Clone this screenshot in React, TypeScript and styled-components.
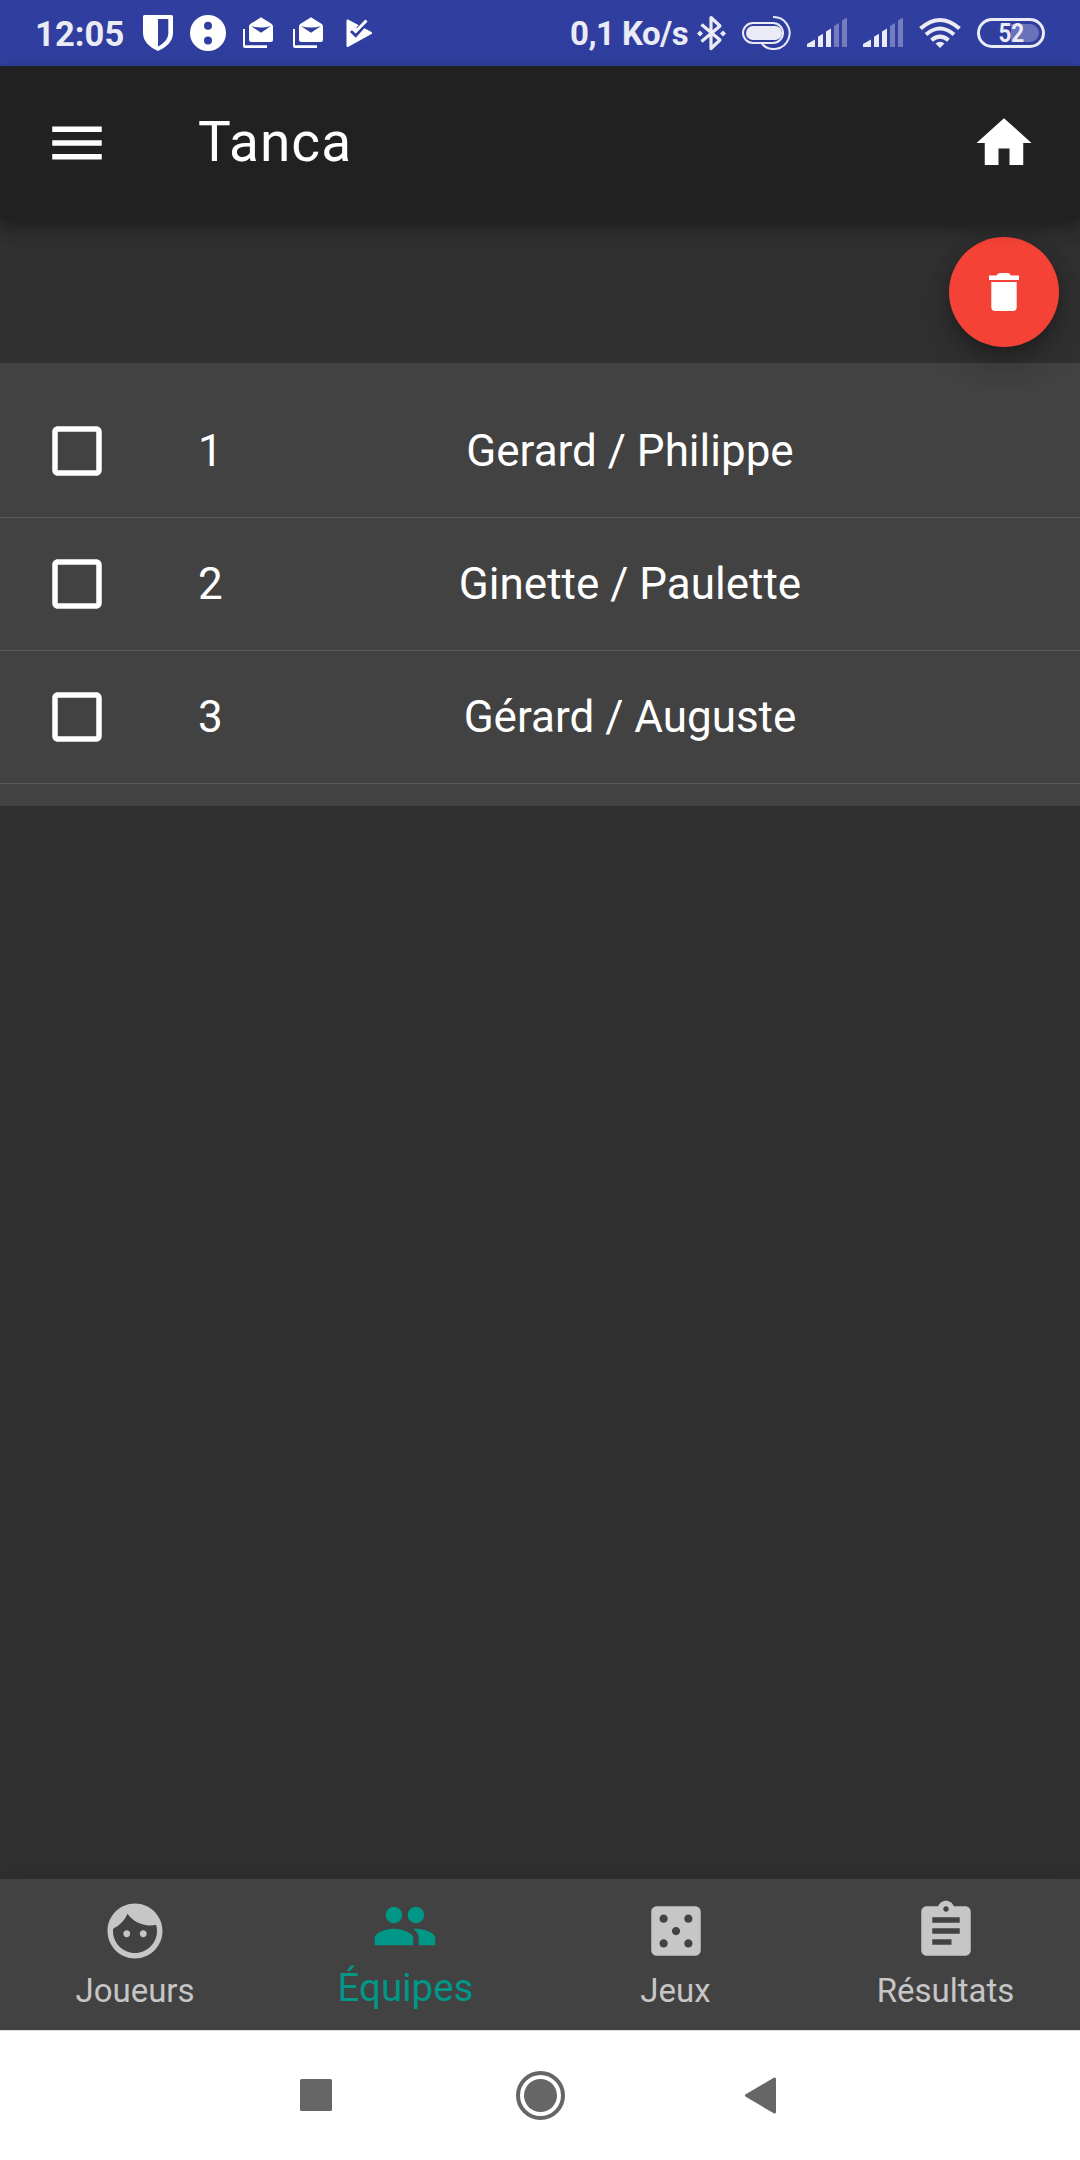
import React from "react";
import styled, { createGlobalStyle } from "styled-components";

const GlobalStyle = createGlobalStyle`
  * { box-sizing: border-box; }
  body { margin: 0; background: #303030; }
`;

const Screen = styled.div`
  display: flex;
  flex-direction: column;
  width: 1080px;
  height: 2160px;
  overflow: hidden;
  background: #303030;
  color: #fff;
  font-family: Roboto, "Noto Sans", sans-serif;
`;

const StatusBar = styled.header`
  display: flex;
  justify-content: space-between;
  height: 66px;
  flex: none;
  padding: 0 35px;
  background: #303f9f;
  color: #ebebf6;
`;

const StatusGroup = styled.div`
  display: flex;
  align-items: center;
`;

const StatusText = styled.span<{ $size: number; $width: number; $spacing: number }>`
  width: ${(p) => p.$width}px;
  font-size: ${(p) => p.$size}px;
  letter-spacing: ${(p) => p.$spacing}px;
  line-height: 66px;
  font-weight: 700;
  white-space: nowrap;
  padding-top: 2px;
`;

const StatusIcon = styled.svg<{ $gap: number }>`
  display: block;
  flex: none;
  height: 66px;
  margin-left: ${(p) => p.$gap}px;
`;

const Battery = styled.div`
  position: relative;
  display: flex;
  align-items: center;
  justify-content: center;
  width: 68px;
  height: 30px;
  margin-left: 16px;
  border: 3px solid #ebebf6;
  border-radius: 15px;
`;

const BatteryLevel = styled.span`
  position: absolute;
  top: 3px;
  right: 3px;
  width: 28px;
  height: 18px;
  border-radius: 0 9px 9px 0;
  background: #6a73b9;
`;

const BatteryText = styled.span`
  position: relative;
  padding-top: 2px;
  font-size: 25px;
  line-height: 24px;
  font-weight: 700;
  transform: scaleX(0.9);
`;

const AppBar = styled.div`
  position: relative;
  z-index: 2;
  display: flex;
  align-items: center;
  height: 154px;
  flex: none;
  padding: 0 43px 0 44px;
  background: #212121;
  box-shadow: 0 5.5px 11px -2.75px rgba(0, 0, 0, 0.2),
    0 11px 13.75px rgba(0, 0, 0, 0.14), 0 2.75px 27.5px rgba(0, 0, 0, 0.12);
`;

const Title = styled.h1`
  flex: 1;
  margin: 0 0 0 88px;
  padding-bottom: 2px;
  font-size: 55px;
  line-height: 64px;
  font-weight: 400;
  letter-spacing: 1.1px;
`;

const Glyph = styled.svg`
  display: block;
  flex: none;
  width: 66px;
  height: 66px;
  fill: currentColor;
`;

const Actions = styled.div`
  position: relative;
  z-index: 1;
  display: flex;
  justify-content: flex-end;
  height: 143px;
  flex: none;
  padding: 17px 21px 16px;
`;

const Fab = styled.button`
  display: flex;
  align-items: center;
  justify-content: center;
  width: 110px;
  height: 110px;
  padding: 0 0 1px;
  border: 0;
  border-radius: 50%;
  background: #f44336;
  color: #fff;
  box-shadow: 0 8.25px 13.75px -2.75px rgba(0, 0, 0, 0.2),
    0 16.5px 27.5px rgba(0, 0, 0, 0.14), 0 2.75px 49.5px rgba(0, 0, 0, 0.12);
`;

const Card = styled.ul`
  margin: 0;
  padding: 22px 0;
  list-style: none;
  background: #424242;
`;

const Row = styled.li`
  display: flex;
  align-items: center;
  height: 133px;
  padding: 0 44px;
  border-bottom: 1px solid #5a5a5a;
  font-size: 44px;
  line-height: 52px;
`;

const RowNumber = styled.span`
  width: 26px;
  margin-left: 88px;
`;

const RowName = styled.span`
  flex: 1;
  text-align: center;
`;

const Body = styled.main`
  flex: 1;
`;

const TabBar = styled.nav`
  position: relative;
  display: grid;
  grid-template-columns: repeat(4, 1fr);
  height: 151px;
  flex: none;
  background: #424242;
  box-shadow: 0 13.75px 13.75px -8.25px rgba(0, 0, 0, 0.2),
    0 22px 27.5px 2.75px rgba(0, 0, 0, 0.14),
    0 8.25px 38.5px 5.5px rgba(0, 0, 0, 0.12);
`;

const Tab = styled.div<{ $active?: boolean }>`
  display: flex;
  flex-direction: column;
  align-items: center;
  gap: ${(p) => (p.$active ? 6 : 7)}px;
  padding-top: ${(p) => (p.$active ? 14 : 19)}px;
  color: ${(p) => (p.$active ? "#009688" : "#c6c6c6")};
  font-size: ${(p) => (p.$active ? 38.5 : 33)}px;
  line-height: ${(p) => (p.$active ? 45 : 39)}px;

  &:nth-child(n + 3) {
    padding-left: 1px;
  }
`;

const TabLabel = styled.span<{ $active?: boolean }>`
  padding-left: ${(p) => (p.$active ? 1 : 0)}px;
`;

const NavBar = styled.footer`
  position: relative;
  display: flex;
  justify-content: center;
  align-items: center;
  gap: 174px;
  height: 130px;
  flex: none;
  padding-bottom: 1px;
  border-top: 1px solid #e0e0e0;
  background: #fff;
`;

const NavIcon = styled.svg`
  display: block;
  width: 50px;
  height: 50px;
  fill: #666;
`;

const teams = ["Gerard / Philippe", "Ginette / Paulette", "Gérard / Auguste"];

const tabs = [
  {
    label: "Joueurs",
    path: "M9 11.75c-.69 0-1.25.56-1.25 1.25s.56 1.25 1.25 1.25 1.25-.56 1.25-1.25-.56-1.25-1.25-1.25zm6 0c-.69 0-1.25.56-1.25 1.25s.56 1.25 1.25 1.25 1.25-.56 1.25-1.25-.56-1.25-1.25-1.25zM12 2C6.48 2 2 6.48 2 12s4.48 10 10 10 10-4.48 10-10S17.52 2 12 2zm0 18c-4.41 0-8-3.59-8-8 0-.29.02-.58.05-.86 2.36-1.05 4.23-2.98 5.21-5.37C11.07 8.33 14.05 10 17.42 10c.78 0 1.53-.09 2.25-.26.21.71.33 1.47.33 2.26 0 4.41-3.59 8-8 8z",
  },
  {
    label: "Équipes",
    active: true,
    path: "M16 11c1.66 0 2.99-1.34 2.99-3S17.66 5 16 5c-1.66 0-3 1.34-3 3s1.34 3 3 3zm-8 0c1.66 0 2.99-1.34 2.99-3S9.66 5 8 5C6.34 5 5 6.34 5 8s1.34 3 3 3zm0 2c-2.33 0-7 1.17-7 3.5V19h14v-2.5c0-2.33-4.67-3.5-7-3.5zm8 0c-.29 0-.62.02-.97.05 1.16.84 1.97 1.97 1.97 3.45V19h6v-2.5c0-2.33-4.67-3.5-7-3.5z",
  },
  {
    label: "Jeux",
    path: "M19 3H5c-1.1 0-2 .9-2 2v14c0 1.1.9 2 2 2h14c1.1 0 2-.9 2-2V5c0-1.1-.9-2-2-2zM7.5 18c-.83 0-1.5-.67-1.5-1.5S6.67 15 7.5 15s1.5.67 1.5 1.5S8.33 18 7.5 18zm0-9C6.67 9 6 8.33 6 7.5S6.67 6 7.5 6 9 6.67 9 7.5 8.33 9 7.5 9zm4.5 4.5c-.83 0-1.5-.67-1.5-1.5s.67-1.5 1.5-1.5 1.5.67 1.5 1.5-.67 1.5-1.5 1.5zm4.5 4.5c-.83 0-1.5-.67-1.5-1.5s.67-1.5 1.5-1.5 1.5.67 1.5 1.5-.67 1.5-1.5 1.5zm0-9c-.83 0-1.5-.67-1.5-1.5S15.67 6 16.5 6s1.5.67 1.5 1.5S17.33 9 16.5 9z",
  },
  {
    label: "Résultats",
    path: "M19 3h-4.18C14.4 1.84 13.3 1 12 1c-1.3 0-2.4.84-2.82 2H5c-1.1 0-2 .9-2 2v14c0 1.1.9 2 2 2h14c1.1 0 2-.9 2-2V5c0-1.1-.9-2-2-2zm-7 0c.55 0 1 .45 1 1s-.45 1-1 1-1-.45-1-1 .45-1 1-1zm2 14H7v-2h7v2zm3-4H7v-2h10v2zm0-4H7V7h10v2z",
  },
];

const MailStack = ({ gap }: { gap: number }) => (
  <StatusIcon $gap={gap} width="30" viewBox="0 0 30 66" fill="#fff">
    <path d="M0 29h2v16.3h22V48H2Q0 48 0 46z" />
    <path
      fillRule="evenodd"
      d="M18 17.3 28.8 24Q30 25 30 26.5V39.5Q30 42 27.5 42H8.5Q6 42 6 39.5V26.5Q6 25 7.2 24zM8 26l10 6.8L28 26q-10 3.2-20 0z"
    />
  </StatusIcon>
);

const Signal = ({ gap }: { gap: number }) => (
  <StatusIcon $gap={gap} width="40" viewBox="0 0 40 66" fill="#ebebf6">
    <path d="M0 47v-3l8-4.5V47zM11 47V36.8l5-3V47zM19 47V31.5l5-3V47z" />
    <path opacity=".36" d="M27 47V26l5-3v24zM35 47V20.5l5-3V47z" />
  </StatusIcon>
);

export default function App() {
  return (
    <Screen>
      <GlobalStyle />
      <StatusBar>
        <StatusGroup>
          <StatusText $size={34.5} $width={91} $spacing={0.1}>
            12:05
          </StatusText>
          <StatusIcon $gap={17} width="30" viewBox="0 0 30 66" fill="#fff">
            <path
              fillRule="evenodd"
              d="M1.5 15h27Q30 15 30 16.5V33c0 8.5-7 14.5-15 18C7 47.5 0 41.5 0 33V16.5Q0 15 1.5 15zM15 19v27.5c5-2.5 10.3-7 10.3-13.5V19z"
            />
          </StatusIcon>
          <StatusIcon $gap={17} width="36" viewBox="0 0 36 66">
            <circle cx="18" cy="33" r="18" fill="#fff" />
            <circle cx="18" cy="25.7" r="4" fill="#303f9f" />
            <circle cx="18" cy="40.5" r="4" fill="#303f9f" />
          </StatusIcon>
          <MailStack gap={17} />
          <MailStack gap={20} />
          <StatusIcon $gap={23} width="27" viewBox="0 0 27 66">
            <path
              d="M1.5 20.5 25 33 1.5 46z"
              fill="#fff"
              stroke="#fff"
              strokeWidth="2"
              strokeLinejoin="round"
            />
            <path d="m5 31 4.700 4.500L21 23" fill="none" stroke="#303f9f" strokeWidth="3" />
            <path d="M11 28.500 18 21" fill="none" stroke="#303f9f" strokeWidth="2" />
            <path d="m7 29 2.700 2.500L20.500 20.500" fill="none" stroke="#fff" strokeWidth="3" />
          </StatusIcon>
        </StatusGroup>
        <StatusGroup>
          <StatusText $size={33} $width={118} $spacing={-0.55}>
            0,1 Ko/s
          </StatusText>
          <StatusIcon $gap={9} width="29" viewBox="0 0 29 66" fill="#ebebf6">
            <path
              d="M4.5 24.5 23 40 14 48.5V17.5L23 26 4.5 41.5"
              fill="none"
              stroke="#ebebf6"
              strokeWidth="3.2"
              strokeLinejoin="round"
            />
            <path d="m0 33.5 3-3 3 3-3 3zM23 33.5l3-3 3 3-3 3z" />
          </StatusIcon>
          <StatusIcon $gap={16} width="49" viewBox="0 0 49 66" fill="none" stroke="#ebebf6">
            <rect x="1" y="23" width="40" height="20" rx="10" strokeWidth="2" />
            <rect x="4" y="26" width="36" height="14" rx="7" fill="#ebebf6" stroke="none" />
            <path d="M31 17a16 16 0 1 1-11 27" strokeWidth="2" />
          </StatusIcon>
          <Signal gap={16} />
          <Signal gap={16} />
          <StatusIcon $gap={16} width="42" viewBox="0 0 42 66" fill="none" stroke="#ebebf6">
            <path
              d="M1.5 28.5Q21 11.5 40.5 28.5M7 34.5Q21 22.5 35 34.5M12.5 40.3Q21 33 29.5 40.3"
              strokeWidth="4"
            />
            <path d="m21 48-4.5-4.5Q21 40 25.5 43.5z" fill="#ebebf6" stroke="none" />
          </StatusIcon>
          <Battery>
            <BatteryLevel />
            <BatteryText>52</BatteryText>
          </Battery>
        </StatusGroup>
      </StatusBar>

      <AppBar>
        <Glyph viewBox="0 0 24 24">
          <path d="M3 18h18v-2H3v2zm0-5h18v-2H3v2zm0-7v2h18V6H3z" />
        </Glyph>
        <Title>Tanca</Title>
        <Glyph viewBox="0 0 24 24">
          <path d="M10 20v-6h4v6h5v-8h3L12 3 2 12h3v8z" />
        </Glyph>
      </AppBar>

      <Actions>
        <Fab aria-label="Supprimer">
          <svg width="30" height="38" viewBox="0 0 30 38" fill="currentColor">
            <path d="M0 2.5h7.5Q8.5 0 11 0h8Q21 0 22 2.5h8V7H0z" />
            <path d="M2.3 9h25.4v25q0 4-4 4H6.3q-4 0-4-4z" />
          </svg>
        </Fab>
      </Actions>

      <Card>
        {teams.map((name, i) => (
          <Row key={name}>
            <Glyph viewBox="0 0 24 24">
              <path d="M19 5v14H5V5h14m0-2H5c-1.1 0-2 .9-2 2v14c0 1.1.9 2 2 2h14c1.1 0 2-.9 2-2V5c0-1.1-.9-2-2-2z" />
            </Glyph>
            <RowNumber>{i + 1}</RowNumber>
            <RowName>{name}</RowName>
          </Row>
        ))}
      </Card>

      <Body />

      <TabBar>
        {tabs.map((t) => (
          <Tab key={t.label} $active={t.active}>
            <Glyph viewBox="0 0 24 24">
              <path d={t.path} />
            </Glyph>
            <TabLabel $active={t.active}>{t.label}</TabLabel>
          </Tab>
        ))}
      </TabBar>

      <NavBar>
        <NavIcon viewBox="0 0 50 50">
          <rect x="9" y="9" width="32" height="32" rx="1.5" />
        </NavIcon>
        <NavIcon viewBox="0 0 50 50">
          <circle cx="25.5" cy="25.5" r="22.5" fill="none" stroke="#666" strokeWidth="4" />
          <circle cx="25.5" cy="25.5" r="16.5" />
        </NavIcon>
        <NavIcon viewBox="0 0 50 50">
          <path d="M35.5 9v33L7.5 25.5z" stroke="#666" strokeWidth="3" strokeLinejoin="round" />
        </NavIcon>
      </NavBar>
    </Screen>
  );
}
